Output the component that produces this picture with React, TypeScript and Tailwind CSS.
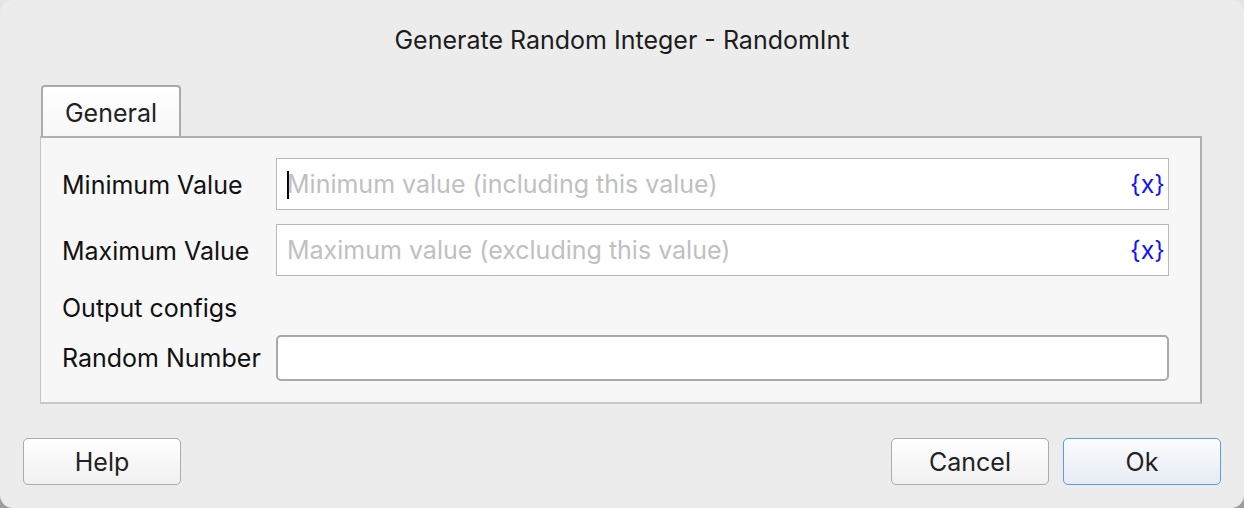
const font = { fontFamily: "Inter, 'Liberation Sans', sans-serif" };

function VarInput({ placeholder, caret }: { placeholder: string; caret?: boolean }) {
  return (
    <div className="flex h-[52px] items-center border border-[#b8b8b8] bg-white pl-[10px] pr-[3px] pt-[2px]">
      {caret ? <span className="mr-[-2px] h-[28px] w-[2px] bg-black" /> : null}
      <span className="flex-1 truncate text-[25px] text-[#c0c0c0]">{placeholder}</span>
      <span className="text-[25px] text-[#1414f5]">{"{x}"}</span>
    </div>
  );
}

function DialogButton({ label, primary }: { label: string; primary?: boolean }) {
  return (
    <button
      type="button"
      className={`h-[47px] w-[158px] rounded-[5px] border pt-[3px] text-[25px] text-[#222] ${
        primary
          ? "border-[#5b9ce9] border-[1.5px] bg-gradient-to-b from-[#fbfcfe] to-[#e6ebf3]"
          : "border-[#ababab] bg-gradient-to-b from-white to-[#f0f0f0]"
      }`}
    >
      {label}
    </button>
  );
}

export default function App() {
  return (
    <div className="h-[508px] w-[1244px] bg-gradient-to-b from-[#e4e4e4] to-[#9c9c9c]" style={font}>
      <div className="flex h-full flex-col rounded-[13px] bg-[#ececec]">
        <div className="pt-[27px] text-center text-[25px] leading-[26px] text-[#1c1c1c]">
          Generate Random Integer - RandomInt
        </div>

        <div className="mt-[32px] pl-[40px] pr-[42px]">
          <div className="ml-[1px] flex h-[51px] w-[140px] items-center justify-center rounded-t-[4px] border-x-2 border-t-2 border-[#ababab] bg-gradient-to-b from-white to-[#f7f7f7] pt-[4px] text-[25px] text-[#222]">
            General
          </div>
          <div className="grid grid-cols-[214px_1fr] items-center border-2 border-l border-[#b0b0b0] border-l-[#c4c4c4] border-b-[#c8c8c8] bg-[#f7f7f7] pb-[21px] pl-[21px] pr-[31px] pt-[20px] text-[25px] text-[#111]">
            <span className="pt-[3px]">Minimum Value</span>
            <VarInput placeholder="Minimum value (including this value)" caret />
            <span className="mt-[14px] pt-[3px]">Maximum Value</span>
            <div className="mt-[14px]">
              <VarInput placeholder="Maximum value (excluding this value)" />
            </div>
            <span className="col-span-2 mt-[14px] h-[32px] pt-[2px] leading-[32px]">Output configs</span>
            <span className="mt-[13px] pt-[2px]">Random Number</span>
            <div className="mt-[13px] h-[46px] rounded-[5px] border-2 border-[#a9a9a9] bg-white" />
          </div>
        </div>

        <div className="mt-[34px] flex items-center px-[23px]">
          <DialogButton label="Help" />
          <div className="flex-1" />
          <div className="flex gap-[14px]">
            <DialogButton label="Cancel" />
            <DialogButton label="Ok" primary />
          </div>
        </div>
      </div>
    </div>
  );
}
